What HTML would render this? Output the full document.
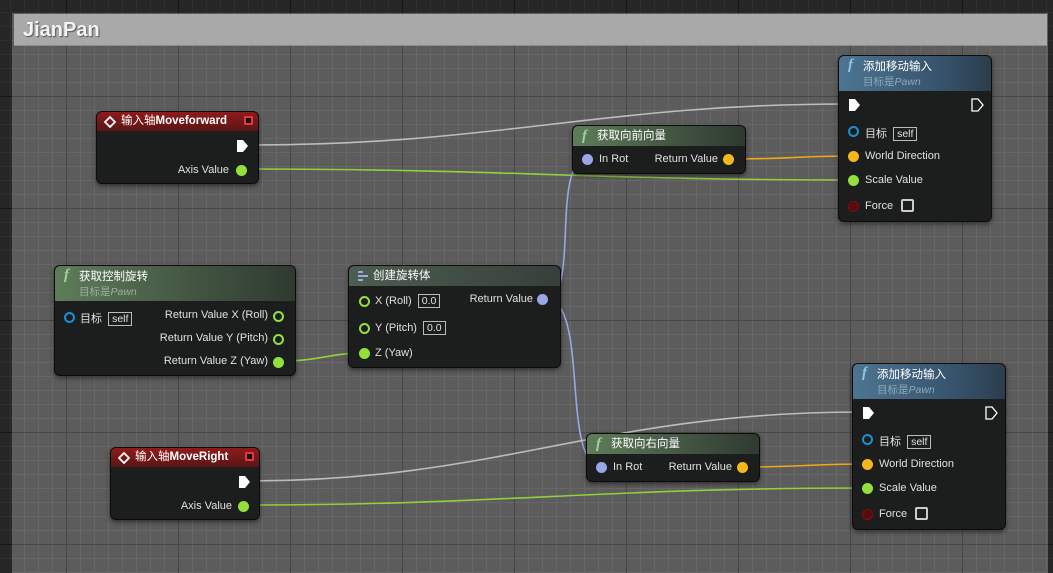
<!DOCTYPE html>
<html><head><meta charset="utf-8"><style>
*{margin:0;padding:0;box-sizing:border-box}
body{width:1053px;height:565px;overflow:hidden;position:relative;background:#262626;font-family:"Liberation Sans","Noto Sans CJK SC",sans-serif;font-size:11px;color:#e6e6e6}
.outgrid{position:absolute;inset:0;
background-image:linear-gradient(#161616 1px,transparent 1px),linear-gradient(90deg,#161616 1px,transparent 1px),linear-gradient(#2f2f2f 1px,transparent 1px),linear-gradient(90deg,#2f2f2f 1px,transparent 1px);
background-size:112px 112px,112px 112px,14px 14px,14px 14px;background-position:66px 96px,66px 96px,10px 12px,10px 12px}
.cbox{position:absolute;left:12px;top:13px;width:1036px;height:560px;background-color:#5c5c5c;
background-image:linear-gradient(#474747 1px,transparent 1px),linear-gradient(90deg,#474747 1px,transparent 1px),linear-gradient(#676767 1px,transparent 1px),linear-gradient(90deg,#676767 1px,transparent 1px);
background-size:112px 112px,112px 112px,14px 14px,14px 14px;background-position:54px 83px,54px 83px,12px 13px,12px 13px}
.chead{position:absolute;left:14px;top:14px;width:1033px;height:32px;background:#a9a9a9;border-bottom:1px solid #8a8a8a}
.chead span{position:absolute;left:9px;top:5px;font-size:20px;font-weight:bold;color:#f4f4f4;text-shadow:1px 1px 1px #555}
.node{position:absolute;background:#1c1e1d;border-radius:6px;border:1px solid #0b0b0b;box-shadow:0 2px 5px rgba(0,0,0,.5)}
.hd{position:relative;border-radius:5px 5px 0 0;padding-left:24px;color:#fff;font-size:11.5px}
.red{background:linear-gradient(#8e1b1b,#5a1515);height:19px;line-height:19px}
.grn{background:linear-gradient(90deg,#5e7c5a,#3d4d3d 70%,#2f3a30)}
.blu{background:linear-gradient(90deg,#4c7592,#36516a 70%,#2c3d4c)}
.sub{color:#9ab09a;font-style:normal;font-size:10.5px}
.blu .sub{color:#8fa8b8}
.f{position:absolute;left:9px;font-family:"Liberation Serif",serif;font-style:italic;font-weight:bold;font-size:15px;color:#9ed39e}
.blu .f{color:#8ec4e8}
.t{position:absolute;white-space:nowrap;font-size:11px;color:#e0e0e0}
.pin{position:absolute;width:11px;height:11px;border-radius:50%}
.box{display:inline-block;border:1px solid #bbb;padding:0 3px;line-height:12px;font-size:10.5px;margin-left:3px}
.exec{position:absolute;width:13px;height:14px}
.redsq{position:absolute;width:9px;height:9px;background:#111;border:2px solid #e23a3a;border-radius:1px}
</style></head><body>
<div class="outgrid"></div>
<div class="cbox"></div>
<div class="chead"><span>JianPan</span></div>

<svg style="position:absolute;left:0;top:0" width="1053" height="565">
<g fill="none" stroke-width="1.6">
<path d="M248 145 C500 145 600 104 848 104" stroke="#bdbdbd"/>
<path d="M245 169 C500 169 600 180 852 180" stroke="#8fd13c"/>
<path d="M732 159 C790 159 800 156 852 156" stroke="#f0a818"/>
<path d="M546 299 C580 299 550 159 588 159" stroke="#9aa6e8"/>
<path d="M546 299 C590 299 560 467 602 467" stroke="#9aa6e8"/>
<path d="M281 361 C320 361 330 353 364 353" stroke="#8fd13c"/>
<path d="M248 481 C500 481 600 412 862 412" stroke="#bdbdbd"/>
<path d="M246 505 C500 505 600 488 866 488" stroke="#8fd13c"/>
<path d="M745 467 C800 467 810 464 866 464" stroke="#f0a818"/>
</g></svg>

<!-- Moveforward -->
<div class="node" style="left:96px;top:111px;width:163px;height:73px">
<div class="hd red"><svg style="position:absolute;left:7px;top:4px" width="12" height="12"><path d="M6 1 L11 6 L6 11 L1 6Z" fill="none" stroke="#fff" stroke-width="1.8"/></svg>输入轴<b>Moveforward</b></div>
<div class="redsq" style="left:147px;top:4px"></div>
<svg class="exec" style="left:139px;top:27px"><path d="M1 1 H7 L12 7 L7 13 H1Z" fill="#fff"/></svg>
<div class="t" style="right:29px;top:52px">Axis Value</div>
<div class="pin" style="left:139px;top:53px;background:#93e03c"></div>
</div>

<!-- MoveRight -->
<div class="node" style="left:110px;top:447px;width:150px;height:73px">
<div class="hd red"><svg style="position:absolute;left:7px;top:4px" width="12" height="12"><path d="M6 1 L11 6 L6 11 L1 6Z" fill="none" stroke="#fff" stroke-width="1.8"/></svg>输入轴<b>MoveRight</b></div>
<div class="redsq" style="left:134px;top:4px"></div>
<svg class="exec" style="left:127px;top:27px"><path d="M1 1 H7 L12 7 L7 13 H1Z" fill="#fff"/></svg>
<div class="t" style="right:27px;top:52px">Axis Value</div>
<div class="pin" style="left:127px;top:53px;background:#93e03c"></div>
</div>

<!-- GetControlRotation -->
<div class="node" style="left:54px;top:265px;width:242px;height:111px">
<div class="hd grn" style="height:35px;padding-top:2px"><span class="f" style="top:1px">f</span>获取控制旋转<br><span class="sub">目标是<i>Pawn</i></span></div>
<div class="pin" style="left:9px;top:46px;border:2px solid #1a8fd6"></div>
<div class="t" style="left:25px;top:44px">目标 <span class="box">self</span></div>
<div class="t" style="right:27px;top:43px">Return Value X (Roll)</div>
<div class="pin" style="left:218px;top:45px;border:2px solid #93e03c"></div>
<div class="t" style="right:27px;top:66px">Return Value Y (Pitch)</div>
<div class="pin" style="left:218px;top:68px;border:2px solid #93e03c"></div>
<div class="t" style="right:27px;top:89px">Return Value Z (Yaw)</div>
<div class="pin" style="left:218px;top:91px;background:#93e03c"></div>
</div>

<!-- MakeRotator -->
<div class="node" style="left:348px;top:265px;width:213px;height:103px">
<div class="hd grn" style="height:20px;line-height:20px;background:linear-gradient(90deg,#4d5d50,#36403a)"><svg style="position:absolute;left:8px;top:5px" width="12" height="10"><path d="M1 1 H6 M1 5 H11 M1 9 H6" stroke="#9ad" stroke-width="2"/></svg>创建旋转体</div>
<div class="pin" style="left:10px;top:30px;border:2px solid #93e03c"></div>
<div class="t" style="left:26px;top:28px">X (Roll) <span class="box">0.0</span></div>
<div class="t" style="right:27px;top:27px">Return Value</div>
<div class="pin" style="left:188px;top:28px;background:#9aa6e8"></div>
<div class="pin" style="left:10px;top:57px;border:2px solid #93e03c"></div>
<div class="t" style="left:26px;top:55px">Y (Pitch) <span class="box">0.0</span></div>
<div class="pin" style="left:10px;top:82px;background:#93e03c"></div>
<div class="t" style="left:26px;top:81px">Z (Yaw)</div>
</div>

<!-- Forward vector -->
<div class="node" style="left:572px;top:125px;width:174px;height:49px">
<div class="hd grn" style="height:20px;line-height:20px"><span class="f" style="top:0">f</span>获取向前向量</div>
<div class="pin" style="left:9px;top:28px;background:#9aa6e8"></div>
<div class="t" style="left:26px;top:27px">In Rot</div>
<div class="t" style="right:27px;top:27px">Return Value</div>
<div class="pin" style="left:150px;top:28px;background:#f4b81c"></div>
</div>

<!-- Right vector -->
<div class="node" style="left:586px;top:433px;width:174px;height:49px">
<div class="hd grn" style="height:20px;line-height:20px"><span class="f" style="top:0">f</span>获取向右向量</div>
<div class="pin" style="left:9px;top:28px;background:#9aa6e8"></div>
<div class="t" style="left:26px;top:27px">In Rot</div>
<div class="t" style="right:27px;top:27px">Return Value</div>
<div class="pin" style="left:150px;top:28px;background:#f4b81c"></div>
</div>

<!-- AddMovementInput top -->
<div class="node" style="left:838px;top:55px;width:154px;height:167px">
<div class="hd blu" style="height:35px;padding-top:2px"><span class="f" style="top:1px">f</span>添加移动输入<br><span class="sub">目标是<i>Pawn</i></span></div>
<svg class="exec" style="left:9px;top:42px"><path d="M1 1 H7 L12 7 L7 13 H1Z" fill="#fff"/></svg>
<svg class="exec" style="left:132px;top:42px"><path d="M1 1 H7 L12 7 L7 13 H1Z" fill="none" stroke="#fff" stroke-width="1.3"/></svg>
<div class="pin" style="left:9px;top:70px;border:2px solid #1a8fd6"></div>
<div class="t" style="left:26px;top:69px">目标 <span class="box">self</span></div>
<div class="pin" style="left:9px;top:95px;background:#f4b81c"></div>
<div class="t" style="left:26px;top:94px">World Direction</div>
<div class="pin" style="left:9px;top:119px;background:#93e03c"></div>
<div class="t" style="left:26px;top:118px">Scale Value</div>
<div class="pin" style="left:9px;top:145px;background:#5a0a0a;border:1px solid #7a1010"></div>
<div class="t" style="left:26px;top:144px">Force</div>
<div style="position:absolute;left:62px;top:143px;width:13px;height:13px;border:2px solid #ccc;border-radius:2px"></div>
</div>

<!-- AddMovementInput bottom -->
<div class="node" style="left:852px;top:363px;width:154px;height:167px">
<div class="hd blu" style="height:35px;padding-top:2px"><span class="f" style="top:1px">f</span>添加移动输入<br><span class="sub">目标是<i>Pawn</i></span></div>
<svg class="exec" style="left:9px;top:42px"><path d="M1 1 H7 L12 7 L7 13 H1Z" fill="#fff"/></svg>
<svg class="exec" style="left:132px;top:42px"><path d="M1 1 H7 L12 7 L7 13 H1Z" fill="none" stroke="#fff" stroke-width="1.3"/></svg>
<div class="pin" style="left:9px;top:70px;border:2px solid #1a8fd6"></div>
<div class="t" style="left:26px;top:69px">目标 <span class="box">self</span></div>
<div class="pin" style="left:9px;top:95px;background:#f4b81c"></div>
<div class="t" style="left:26px;top:94px">World Direction</div>
<div class="pin" style="left:9px;top:119px;background:#93e03c"></div>
<div class="t" style="left:26px;top:118px">Scale Value</div>
<div class="pin" style="left:9px;top:145px;background:#5a0a0a;border:1px solid #7a1010"></div>
<div class="t" style="left:26px;top:144px">Force</div>
<div style="position:absolute;left:62px;top:143px;width:13px;height:13px;border:2px solid #ccc;border-radius:2px"></div>
</div>
</body></html>
